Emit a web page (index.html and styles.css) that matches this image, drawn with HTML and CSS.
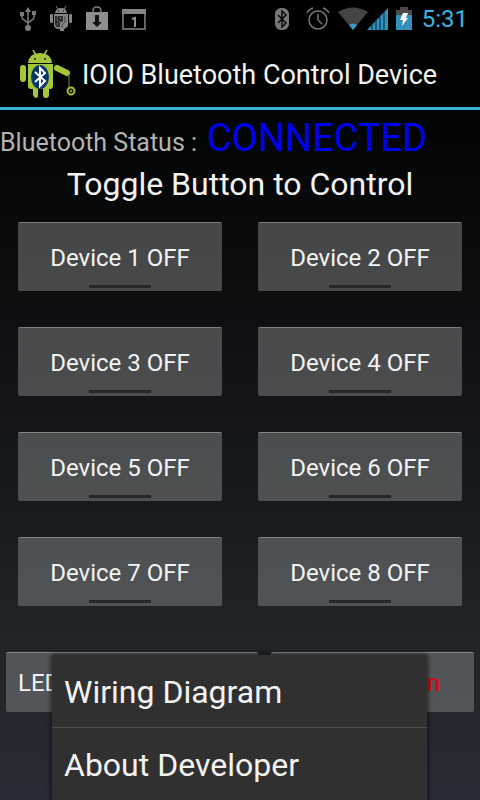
FILE: index.html
```html
<!DOCTYPE html>
<html lang="en">
<head>
<meta charset="utf-8">
<meta name="viewport" content="width=device-width, initial-scale=1">
<title>IOIO Bluetooth Control Device</title>
<link rel="stylesheet" href="styles.css">
</head>
<body>
<div class="screen">
  <div class="status-bar">
    <div class="notices">
      <svg width="18" height="26" viewBox="0 0 18 26" fill="none" stroke="#7c7c7c" stroke-width="1.5" aria-hidden="true">
        <path d="M9 4v17M3 9v2q0 2 2 3l4 3M15 8v3q0 2-2 3l-4 3"/>
        <path d="M9 1l3 5H6zM1 6h4v4H1zM13 5h4v4h-4z" fill="#7c7c7c" stroke="none"/>
        <circle cx="9" cy="22" r="3" fill="#7c7c7c" stroke="none"/>
      </svg>
      <svg width="22" height="26" viewBox="0 0 22 26" fill="#858585" aria-hidden="true">
        <path d="M5 7q1-5 6-5t6 5z"/><path d="M6 0l2 3M16 0l-2 3" stroke="#858585"/>
        <rect x="0" y="8" width="3" height="9" rx="1"/><rect x="19" y="8" width="3" height="9" rx="1"/>
        <path d="M4 8h14v11q0 2-2 3l-2 1v2h-4v-2H8q-4-1-4-4z"/>
        <path d="M5 10h8v5l-3 2v4H7q-2-1-2-3z" fill="#2c2c2c"/>
        <path d="M7 11h1M10 12h1M7 14h1M9 16h1M7 18h1" stroke="#aaa" fill="none"/>
        <path d="M15 10v6l-3 3v3" stroke="#444" fill="none"/>
        <path d="M8 5h1M13 5h1" stroke="#000"/>
      </svg>
      <svg width="24" height="26" viewBox="0 0 24 26" aria-hidden="true">
        <path d="M1 6h22v18H1z" fill="#8e8e8e"/>
        <path d="M8 7V5q0-4 4-4t4 4v2" fill="none" stroke="#7c7c7c" stroke-width="1.5"/>
        <path d="M10 9h4v7h3l-5 5-5-5h3z" fill="#111"/>
      </svg>
      <svg width="24" height="26" viewBox="0 0 24 26" aria-hidden="true">
        <path d="M1 4h22v19H1z" fill="none" stroke="#858585" stroke-width="1.5"/>
        <path d="M0 3h24v5H0z" fill="#858585"/>
        <path d="M10 13l3-1v9" fill="none" stroke="#8c8c8c" stroke-width="2"/>
      </svg>
    </div>
    <div class="system">
      <svg class="bt" width="16" height="24" viewBox="0 0 16 24" aria-hidden="true">
        <rect x="1" y="1" width="14" height="22" rx="6" fill="#777"/>
        <path d="M4 8l8 8-4 4V4l4 4-8 8" fill="none" stroke="#080808" stroke-width="1.5"/>
      </svg>
      <svg class="alarm" width="24" height="24" viewBox="0 0 24 24" fill="none" stroke="#777" stroke-width="1.5" aria-hidden="true">
        <circle cx="12" cy="13" r="9"/><path d="M12 7v6l4 4M1 6q2-4 6-5M23 6q-2-4-6-5"/>
      </svg>
      <svg class="signal" width="50" height="24" viewBox="0 0 50 24" aria-hidden="true">
        <path d="M0 5Q15-4 30 5L15 23z" fill="#444"/>
        <path d="M11 18q4-3 8 0l-4 5z" fill="#2f9cc4"/>
        <path d="M29 23L50 1v22z" fill="#2f94bc"/>
        <path d="M34 16v8M38 12v12M42 8v16M46 4v20" stroke="#06202c"/>
      </svg>
      <svg class="battery" width="16" height="24" viewBox="0 0 16 24" aria-hidden="true">
        <path d="M4 0h8v3h4v5H0V3h4z" fill="#4a4a4a"/>
        <path d="M0 8h16v15H0z" fill="#3092ba"/>
        <path d="M7 6h5l-2 5h2l-6 8 1-6H4z" fill="#fff"/>
      </svg>
      <time>5:31</time>
    </div>
  </div>

  <header class="action-bar">
    <svg width="58" height="50" viewBox="0 0 58 50" aria-hidden="true">
      <g fill="#a4c639">
        <path d="M10 13Q11 3 22 3t12 10z"/>
        <path d="M15 0l3 5M29 0l-3 5" stroke="#a4c639" stroke-width="1.5"/>
        <rect x="2" y="15" width="6" height="17" rx="3"/>
        <path d="M10 14h25v22q0 3-3 3h-1v6q0 3-3 3t-3-3v-6h-5v6q0 3-2 3t-3-3v-6h-2q-3 0-3-3z"/>
        <path d="M39 18l10 5" stroke="#a4c639" stroke-width="6" stroke-linecap="round"/>
      </g>
      <path d="M51 24v15" stroke="#718b2b"/>
      <circle cx="53" cy="41" r="3.5" fill="#171d05" stroke="#a4b52e" stroke-width="2"/>
      <circle cx="53" cy="41" r="1" fill="#a4c639"/>
      <ellipse cx="22" cy="27" rx="9" ry="12" fill="#093765"/>
      <path d="M17 22l10 9-5 5V18l5 5-10 9" fill="none" stroke="#fff" stroke-width="2"/>
      <circle cx="17" cy="9" r="1" fill="#111"/><circle cx="27" cy="9" r="1" fill="#111"/>
    </svg>
    <h1>IOIO Bluetooth Control Device</h1>
  </header>

  <main>
    <p class="connection"><span>Bluetooth Status :</span><strong>CONNECTED</strong></p>
    <h2>Toggle Button to Control</h2>
    <div class="devices">
      <button type="button" class="toggle" aria-pressed="false">Device 1 OFF</button>
      <button type="button" class="toggle" aria-pressed="false">Device 2 OFF</button>
      <button type="button" class="toggle" aria-pressed="false">Device 3 OFF</button>
      <button type="button" class="toggle" aria-pressed="false">Device 4 OFF</button>
      <button type="button" class="toggle" aria-pressed="false">Device 5 OFF</button>
      <button type="button" class="toggle" aria-pressed="false">Device 6 OFF</button>
      <button type="button" class="toggle" aria-pressed="false">Device 7 OFF</button>
      <button type="button" class="toggle" aria-pressed="false">Device 8 OFF</button>
    </div>
    <div class="actions">
      <button type="button" class="action led">LED</button>
      <button type="button" class="action alert">n</button>
    </div>
  </main>

  <nav class="menu">
    <a href="#wiring">Wiring Diagram</a>
    <a href="#about">About Developer</a>
  </nav>
</div>
</body>
</html>
```
FILE: styles.css
```css
* {
  box-sizing: border-box;
}

body {
  margin: 0;
  background: #000;
  color: #f3f3f3;
  font-family: Roboto, "Liberation Sans", sans-serif;
}

.screen {
  position: relative;
  display: flex;
  flex-direction: column;
  min-height: 100vh;
  overflow: hidden;
  background: linear-gradient(#000 0, #020303 110px, #0d0e10 300px, #1a1d21 540px, #212529 650px, #272b35 100%);
}

.status-bar {
  display: flex;
  align-items: center;
  justify-content: space-between;
  height: 38px;
  padding: 0 12px 0 19px;
  background: #000;
}

.notices,
.system {
  display: flex;
  align-items: center;
}

.notices {
  gap: 13px;
}

.bt {
  margin-right: 16px;
}

.alarm {
  margin-right: 8px;
}

.signal {
  margin-right: 8px;
}

.battery {
  margin-right: 10px;
}

.system time {
  color: #33b5e5;
  font-size: 24px;
  line-height: 38px;
}

.action-bar {
  display: flex;
  align-items: center;
  gap: 6px;
  height: 72px;
  padding: 4px 0 0 18px;
  border-bottom: 3px solid #3cabd7;
}

h1,
h2 {
  margin: 0;
  font-weight: 400;
}

h1 {
  font-size: 27px;
  line-height: 36px;
}

.connection {
  display: flex;
  align-items: baseline;
  gap: 10px;
  height: 54px;
  margin: 0;
  color: #b4b4b4;
  font-size: 25px;
  line-height: 56px;
}

.connection strong {
  color: #0000f0;
  font-size: 38px;
  font-weight: 400;
}

h2 {
  font-size: 32px;
  line-height: 40px;
  text-align: center;
}

.devices {
  display: grid;
  grid-template-columns: 1fr 1fr;
  gap: 36px;
  padding: 18px;
}

button {
  border: 0;
  border-top: 1px solid rgba(255, 255, 255, 0.3);
  border-radius: 2px;
  background: rgba(135, 137, 138, 0.48);
  color: #f3f3f3;
  font: 24px/28px Roboto, "Liberation Sans", sans-serif;
}

.toggle {
  display: flex;
  flex-direction: column;
  align-items: center;
  justify-content: space-between;
  height: 69px;
  padding: 21px 0 3px;
}

.toggle::after {
  width: 62px;
  height: 3px;
  background: #252729;
  content: "";
}

.actions {
  display: grid;
  grid-template-columns: 252fr 203fr;
  gap: 13px;
  padding: 28px 6px 0;
}

.action {
  height: 60px;
  padding: 0 34px 0 12px;
}

.led {
  text-align: left;
}

.alert {
  color: #d00d14;
  font-weight: 500;
  text-align: right;
}

.menu {
  position: absolute;
  right: 53px;
  bottom: 0;
  left: 52px;
  border-radius: 2px 2px 0 0;
  background: #303030;
  box-shadow: 0 0 5px 1px rgba(0, 0, 0, 0.6);
}

.menu a {
  display: block;
  height: 72px;
  padding: 0 12px;
  color: #f3f3f3;
  font-size: 32px;
  line-height: 74px;
  text-decoration: none;
}

.menu a + a {
  height: 73px;
  border-top: 1px solid #4d4d4d;
}
```
